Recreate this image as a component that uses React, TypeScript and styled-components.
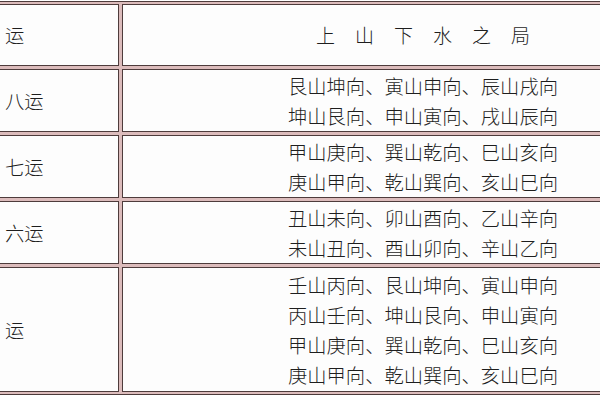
import React from "react";
import styled, { createGlobalStyle } from "styled-components";

const Global = createGlobalStyle`
  html, body { margin: 0; padding: 0; background: #ffffff; }
  body { width: 600px; height: 400px; overflow: hidden; }
`;

const Frame = styled.div`
  width: 600px;
  height: 400px;
  overflow: hidden;
  background: #fff;
`;

const Grid = styled.div`
  margin-top: 1px;
  display: grid;
  grid-template-columns: 119px 1fr;
  grid-template-rows: 62px 63px 63px 63px 125px;
  gap: 3px;
  padding: 2px 0 2px 0;
  background: #dcbcbc;
  border-top: 1px solid #4e3c3c;
  border-bottom: 1px solid #4e3c3c;
  font-family: "Noto Sans CJK SC", "Noto Sans", sans-serif;
  color: #1e1e1e;
`;

const Cell = styled.div<{ $side: "left" | "right" }>`
  background: #fdfdfd;
  border-top: 1px solid #4e3c3c;
  border-bottom: 1px solid #4e3c3c;
  border-left: ${(p) => (p.$side === "right" ? "1px solid #4e3c3c" : "none")};
  border-right: ${(p) => (p.$side === "left" ? "1px solid #4e3c3c" : "none")};
  box-sizing: border-box;
  display: flex;
  flex-direction: column;
  justify-content: center;
  align-items: ${(p) => (p.$side === "left" ? "flex-start" : "center")};
  padding-left: ${(p) => (p.$side === "left" ? "5px" : "123px")};
  font-size: 19.3px;
  line-height: 30px;
  font-weight: 300;
`;

const Title = styled.div`
  display: flex;
  gap: 20px;
  font-size: 19px;
  line-height: 30px;
`;

const Line = styled.div`
  white-space: nowrap;
`;

const rows: { label: string; lines: string[] }[] = [
  { label: "八运", lines: ["艮山坤向、寅山申向、辰山戌向", "坤山艮向、申山寅向、戌山辰向"] },
  { label: "七运", lines: ["甲山庚向、巽山乾向、巳山亥向", "庚山甲向、乾山巽向、亥山巳向"] },
  { label: "六运", lines: ["丑山未向、卯山酉向、乙山辛向", "未山丑向、酉山卯向、辛山乙向"] },
  {
    label: "运",
    lines: [
      "壬山丙向、艮山坤向、寅山申向",
      "丙山壬向、坤山艮向、申山寅向",
      "甲山庚向、巽山乾向、巳山亥向",
      "庚山甲向、乾山巽向、亥山巳向",
    ],
  },
];

export default function App() {
  return (
    <Frame>
      <Global />
      <Grid>
        <Cell $side="left">运</Cell>
        <Cell $side="right">
          <Title>
            {"上山下水之局".split("").map((c, i) => (
              <span key={i}>{c}</span>
            ))}
          </Title>
        </Cell>
        {rows.map((r) => (
          <React.Fragment key={r.label + r.lines[0]}>
            <Cell $side="left">{r.label}</Cell>
            <Cell $side="right">
              {r.lines.map((l) => (
                <Line key={l}>{l}</Line>
              ))}
            </Cell>
          </React.Fragment>
        ))}
      </Grid>
    </Frame>
  );
}
